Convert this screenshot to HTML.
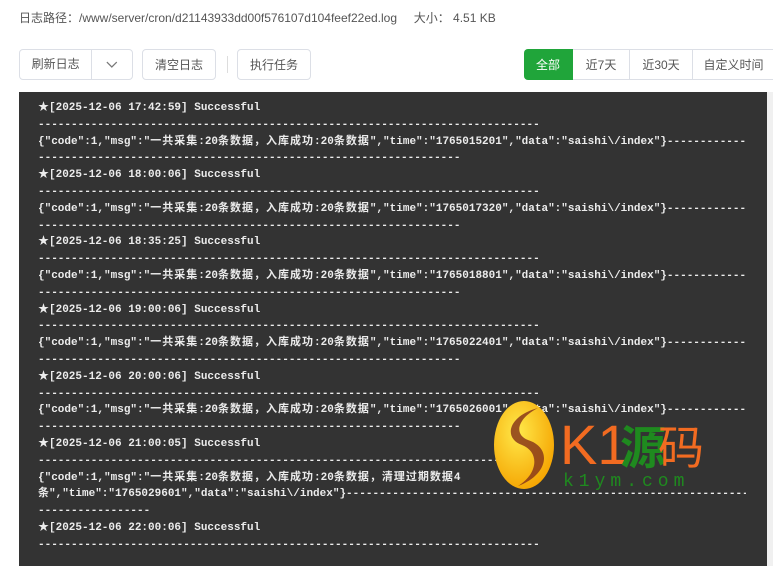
<!DOCTYPE html>
<html><head><meta charset="utf-8"><style>
*{margin:0;padding:0;box-sizing:border-box}
body{width:773px;height:566px;background:#fff;font-family:"Liberation Sans","Noto Sans CJK SC",sans-serif;position:relative;overflow:hidden;color:#555}
.path{position:absolute;left:19px;top:10px;font-size:12px;color:#555;line-height:16px}
.btn{position:absolute;top:49px;height:31px;border:1px solid #dcdfe6;border-radius:4px;font-size:12px;color:#555;display:flex;align-items:center;justify-content:center;background:#fff}
.tabs{position:absolute;top:49px;left:524px;height:31px;display:flex;font-size:12px}
.tabs div{border:1px solid #dcdfe6;border-left:none;display:flex;align-items:center;justify-content:center;color:#555}
.log{position:absolute;left:19px;top:92px;width:748px;height:474px;background:#333;overflow:hidden}
.sb{position:absolute;left:767px;top:92px;width:6px;height:474px;background:#f0f0f0}
.lines{position:absolute;left:19px;top:8px;width:708px;font-family:"Liberation Mono","Noto Sans CJK SC",monospace;font-weight:bold;font-size:11px;color:#ececec;line-height:16.8px;white-space:pre;overflow:hidden}
.lines div{overflow:hidden;height:16.8px}
.cj{letter-spacing:1px}
</style></head><body>
<div class="path">日志路径：/www/server/cron/d21143933dd00f576107d104feef22ed.log &nbsp;&nbsp;&nbsp;&nbsp;大小：&nbsp;4.51 KB</div>
<div class="btn" style="left:19px;width:114px;justify-content:flex-start"><span style="width:73px;text-align:center;border-right:1px solid #dcdfe6;line-height:29px">刷新日志</span><svg width="40" height="12" viewBox="0 0 40 12"><path d="M15 3l5 5 5-5" fill="none" stroke="#777" stroke-width="1.2"/></svg></div>
<div class="btn" style="left:142px;width:74px">清空日志</div>
<div style="position:absolute;left:227px;top:56px;width:1px;height:17px;background:#ddd"></div>
<div class="btn" style="left:237px;width:74px">执行任务</div>
<div class="tabs">
<div style="width:49px;background:#20a53a;color:#fff;border-color:#20a53a;border-radius:4px 0 0 4px">全部</div>
<div style="width:57px">近7天</div>
<div style="width:63px">近30天</div>
<div style="width:82px">自定义时间</div>
</div>
<div class="log"><div class="lines" id="L"></div></div>
<div class="sb"></div>
<svg style="position:absolute;left:486px;top:398px" width="240" height="95">
<defs><radialGradient id="g" cx="40%" cy="35%" r="70%"><stop offset="0" stop-color="#ffe94a"/><stop offset="1" stop-color="#f5a300"/></radialGradient></defs>
<ellipse cx="38" cy="47" rx="30" ry="44" fill="url(#g)"/>
<path d="M52 10 C22 18 17 40 36 47 C54 54 52 76 32 88 C62 77 67 50 42 42 C27 36 32 20 52 10Z" fill="#8a3a1a" opacity=".85"/>
<text x="74" y="66" font-family="Liberation Sans,sans-serif" font-size="56" fill="#f26b21">K1</text>
<text x="134" y="66" font-family="Noto Sans CJK SC,sans-serif" font-size="46" font-weight="bold" fill="#1f8a1f">源</text>
<text x="172" y="66" font-family="Noto Sans CJK SC,sans-serif" font-size="46" fill="#f26b21">码</text>
<text x="77" y="88" font-family="Liberation Mono,monospace" font-size="18" letter-spacing="5" fill="#1f8a1f">k1ym.com</text>
</svg>
<script>
var d76='-'.repeat(76),d64='-'.repeat(64),d200='-'.repeat(200);
var e=[["17:42:59","1765015201"],["18:00:06","1765017320"],["18:35:25","1765018801"],["19:00:06","1765022401"],["20:00:06","1765026001"]];
var h='';
e.forEach(function(x){h+='<div>★[2025-12-06 '+x[0]+'] Successful</div><div>'+d76+'</div><div>{"code":1,"msg":"<span class="cj">一共采集</span>:20<span class="cj">条数据，入库成功</span>:20<span class="cj">条数据</span>","time":"'+x[1]+'","data":"saishi\\/index"}'+d200+'</div><div>'+d64+'</div>';});
h+='<div>★[2025-12-06 21:00:05] Successful</div><div>'+d76+'</div><div>{"code":1,"msg":"<span class="cj">一共采集</span>:20<span class="cj">条数据，入库成功</span>:20<span class="cj">条数据，清理过期数据</span>4</div><div>条","time":"1765029601","data":"saishi\\/index"}'+d200+'</div><div>'+'-'.repeat(17)+'</div>';
h+='<div>★[2025-12-06 22:00:06] Successful</div><div>'+d76+'</div>';
document.getElementById('L').innerHTML=h;
</script>
</body></html>
